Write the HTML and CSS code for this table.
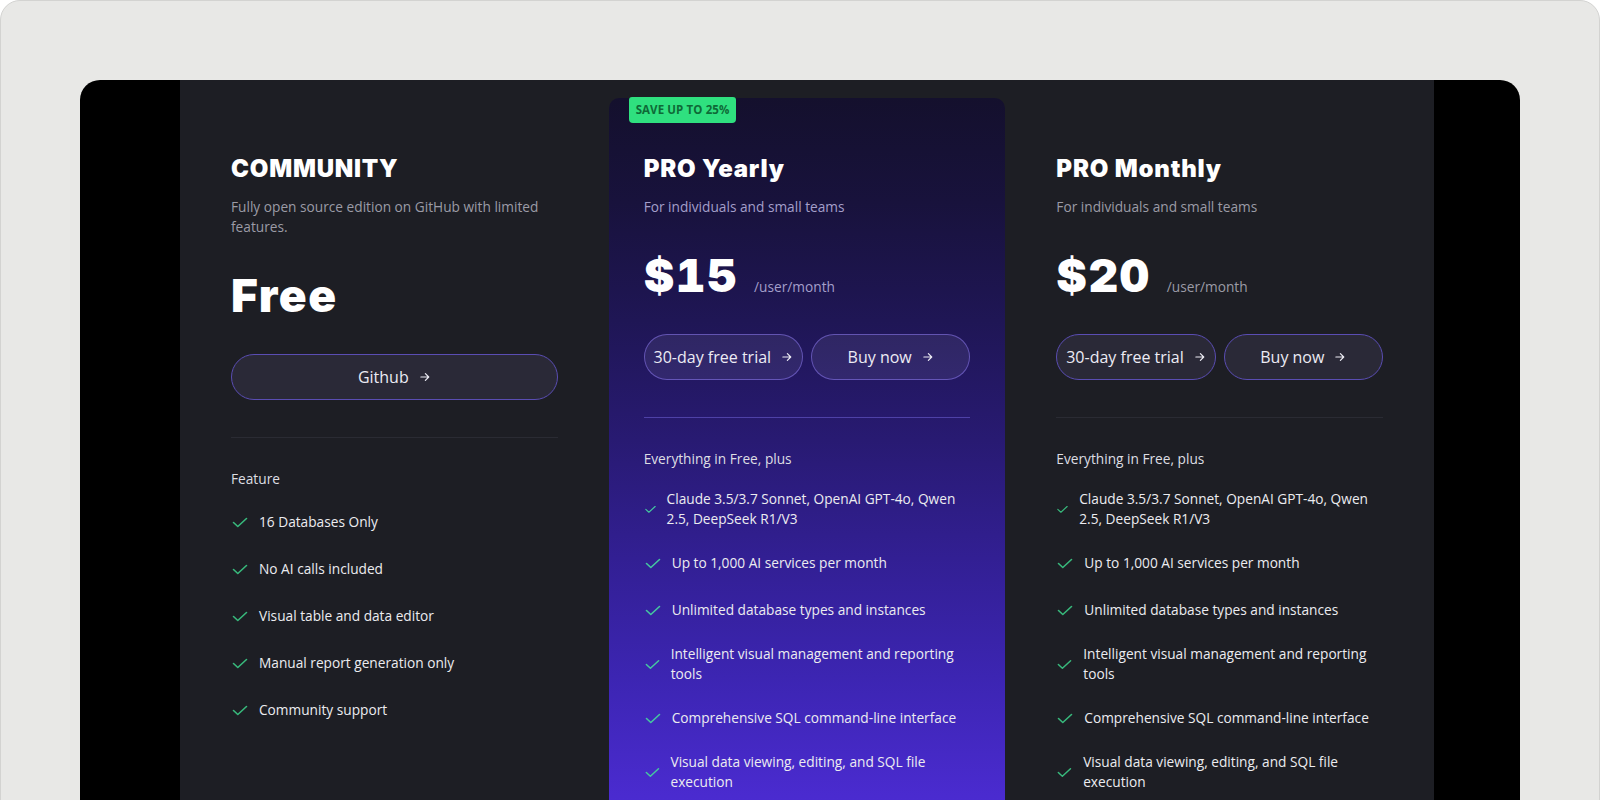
FILE: index.html
```html
<!DOCTYPE html>
<html lang="en">
<head>
<meta charset="utf-8">
<title>Pricing</title>
<link rel="stylesheet" href="styles.css">
</head>
<body>
<div class="shell">
  <div class="frame">
    <div class="pricing">
      <section class="plan">
        <h2 class="plan-title">COMMUNITY</h2>
        <p class="plan-desc">Fully open source edition on GitHub with limited features.</p>
        <div class="price"><span class="amount">Free</span></div>
        <div class="actions">
          <a class="btn" href="#">Github <svg class="arrow" viewBox="0 0 16 16"><path d="M2.5 8h10.5M8.5 3.5L13 8l-4.5 4.5"/></svg></a>
        </div>
        <div class="divider"></div>
        <div class="list-label">Feature</div>
        <ul class="features">
          <li><svg class="check" viewBox="0 0 18 18"><path d="M2.5 9.5L6.8 13.5L15.5 5.5"/></svg><span>16 Databases Only</span></li>
          <li><svg class="check" viewBox="0 0 18 18"><path d="M2.5 9.5L6.8 13.5L15.5 5.5"/></svg><span>No AI calls included</span></li>
          <li><svg class="check" viewBox="0 0 18 18"><path d="M2.5 9.5L6.8 13.5L15.5 5.5"/></svg><span>Visual table and data editor</span></li>
          <li><svg class="check" viewBox="0 0 18 18"><path d="M2.5 9.5L6.8 13.5L15.5 5.5"/></svg><span>Manual report generation only</span></li>
          <li><svg class="check" viewBox="0 0 18 18"><path d="M2.5 9.5L6.8 13.5L15.5 5.5"/></svg><span>Community support</span></li>
        </ul>
      </section>

      <section class="plan plan--featured">
        <span class="badge">SAVE UP TO 25%</span>
        <h2 class="plan-title">PRO Yearly</h2>
        <p class="plan-desc">For individuals and small teams</p>
        <div class="price"><span class="amount">$15</span><span class="per">/user/month</span></div>
        <div class="actions">
          <a class="btn" href="#">30-day free trial <svg class="arrow" viewBox="0 0 16 16"><path d="M2.5 8h10.5M8.5 3.5L13 8l-4.5 4.5"/></svg></a>
          <a class="btn" href="#">Buy now <svg class="arrow" viewBox="0 0 16 16"><path d="M2.5 8h10.5M8.5 3.5L13 8l-4.5 4.5"/></svg></a>
        </div>
        <div class="divider"></div>
        <div class="list-label">Everything in Free, plus</div>
        <ul class="features">
          <li><svg class="check" viewBox="0 0 18 18"><path d="M2.5 9.5L6.8 13.5L15.5 5.5"/></svg><span>Claude 3.5/3.7 Sonnet, OpenAI GPT-4o, Qwen 2.5, DeepSeek R1/V3</span></li>
          <li><svg class="check" viewBox="0 0 18 18"><path d="M2.5 9.5L6.8 13.5L15.5 5.5"/></svg><span>Up to 1,000 AI services per month</span></li>
          <li><svg class="check" viewBox="0 0 18 18"><path d="M2.5 9.5L6.8 13.5L15.5 5.5"/></svg><span>Unlimited database types and instances</span></li>
          <li><svg class="check" viewBox="0 0 18 18"><path d="M2.5 9.5L6.8 13.5L15.5 5.5"/></svg><span>Intelligent visual management and reporting tools</span></li>
          <li><svg class="check" viewBox="0 0 18 18"><path d="M2.5 9.5L6.8 13.5L15.5 5.5"/></svg><span>Comprehensive SQL command-line interface</span></li>
          <li><svg class="check" viewBox="0 0 18 18"><path d="M2.5 9.5L6.8 13.5L15.5 5.5"/></svg><span>Visual data viewing, editing, and SQL file execution</span></li>
        </ul>
      </section>

      <section class="plan">
        <h2 class="plan-title">PRO Monthly</h2>
        <p class="plan-desc">For individuals and small teams</p>
        <div class="price"><span class="amount">$20</span><span class="per">/user/month</span></div>
        <div class="actions">
          <a class="btn" href="#">30-day free trial <svg class="arrow" viewBox="0 0 16 16"><path d="M2.5 8h10.5M8.5 3.5L13 8l-4.5 4.5"/></svg></a>
          <a class="btn" href="#">Buy now <svg class="arrow" viewBox="0 0 16 16"><path d="M2.5 8h10.5M8.5 3.5L13 8l-4.5 4.5"/></svg></a>
        </div>
        <div class="divider"></div>
        <div class="list-label">Everything in Free, plus</div>
        <ul class="features">
          <li><svg class="check" viewBox="0 0 18 18"><path d="M2.5 9.5L6.8 13.5L15.5 5.5"/></svg><span>Claude 3.5/3.7 Sonnet, OpenAI GPT-4o, Qwen 2.5, DeepSeek R1/V3</span></li>
          <li><svg class="check" viewBox="0 0 18 18"><path d="M2.5 9.5L6.8 13.5L15.5 5.5"/></svg><span>Up to 1,000 AI services per month</span></li>
          <li><svg class="check" viewBox="0 0 18 18"><path d="M2.5 9.5L6.8 13.5L15.5 5.5"/></svg><span>Unlimited database types and instances</span></li>
          <li><svg class="check" viewBox="0 0 18 18"><path d="M2.5 9.5L6.8 13.5L15.5 5.5"/></svg><span>Intelligent visual management and reporting tools</span></li>
          <li><svg class="check" viewBox="0 0 18 18"><path d="M2.5 9.5L6.8 13.5L15.5 5.5"/></svg><span>Comprehensive SQL command-line interface</span></li>
          <li><svg class="check" viewBox="0 0 18 18"><path d="M2.5 9.5L6.8 13.5L15.5 5.5"/></svg><span>Visual data viewing, editing, and SQL file execution</span></li>
        </ul>
      </section>
    </div>
  </div>
</div>
</body>
</html>
```

FILE: styles.css
```css
html, body {
  margin: 0;
  padding: 0;
  background: #ffffff;
  overflow: hidden;
}

body {
  font-family: "Open Sans", "Noto Sans", sans-serif;
}

.shell {
  box-sizing: border-box;
  width: 1600px;
  height: 840px;
  border: 1px solid #d3d3d1;
  border-radius: 20px;
  background: #e8e8e6;
  padding: 79px 0 0 79px;
  overflow: hidden;
}

.frame {
  box-sizing: border-box;
  width: 1440px;
  height: 760px;
  background: #000;
  border-radius: 20px 20px 0 0;
  padding-left: 100px;
  overflow: hidden;
}

.pricing {
  box-sizing: border-box;
  width: 1254px;
  height: 100%;
  background: #1d1e24;
  display: grid;
  grid-template-columns: repeat(3, 1fr);
  gap: 16px;
  padding: 18px 16px 0;
}

.plan {
  position: relative;
  padding: 55px 35px 0;
  border-radius: 10px 10px 0 0;
  min-width: 0;
}

.plan--featured {
  background: linear-gradient(180deg, #14102d 0%, #18123c 14%, #1f1655 30%, #281a72 46%, #321f93 62%, #3c25b2 78%, #4a2bcf 94%, #4d2dd4 100%);
}

.badge {
  position: absolute;
  top: -1px;
  left: 20px;
  background: #2fe07f;
  color: #0e6a37;
  font-weight: 700;
  font-size: 11.5px;
  line-height: 26px;
  padding: 0 7px;
  border-radius: 3px 3px 4px 4px;
  letter-spacing: 0.1px;
}

.plan-title {
  margin: 0;
  font-family: "Inter", "Roboto", sans-serif;
  font-weight: 900;
  font-size: 24px;
  line-height: 32px;
  letter-spacing: 0.8px;
  color: #ffffff;
}

.plan-desc {
  margin: 12px 0 0;
  font-size: 13.7px;
  line-height: 20px;
  color: #9b9ba6;
}

.plan--featured .plan-desc {
  color: #a49fca;
}

.price {
  display: flex;
  align-items: baseline;
  margin-top: 30px;
}

.amount {
  font-family: "Inter", "Roboto", sans-serif;
  font-weight: 900;
  font-size: 46px;
  line-height: 56px;
  letter-spacing: 1.5px;
  font-variant-numeric: tabular-nums;
  color: #ffffff;
}

.per {
  margin-left: 16px;
  font-size: 13.7px;
  color: #9b9ba6;
}

.plan--featured .per {
  color: #a49fca;
}

.actions {
  display: flex;
  gap: 8px;
  margin-top: 31px;
}

.btn {
  flex: 1;
  box-sizing: border-box;
  height: 46px;
  border-radius: 23px;
  border: 1px solid #5a4db3;
  background: #2a2937;
  color: #ecebf4;
  font-size: 16px;
  text-decoration: none;
  display: flex;
  align-items: center;
  justify-content: center;
  gap: 10px;
  white-space: nowrap;
}

.plan--featured .btn {
  background: rgba(255, 255, 255, 0.07);
  border-color: rgba(150, 130, 255, 0.5);
}

.arrow {
  width: 12px;
  height: 12px;
  fill: none;
  stroke: currentColor;
  stroke-width: 1.6;
  stroke-linecap: round;
  stroke-linejoin: round;
}

.divider {
  height: 1px;
  margin-top: 37px;
  background: #2a2b33;
}

.plan--featured .divider {
  background: rgba(140, 125, 255, 0.4);
}

.list-label {
  margin-top: 31px;
  font-size: 13.7px;
  line-height: 20px;
  color: #dedee3;
}

.features {
  list-style: none;
  margin: 20px 0 0;
  padding: 0;
  display: flex;
  flex-direction: column;
  gap: 21px;
}

.features li {
  display: flex;
  align-items: center;
  gap: 10px;
  min-height: 26px;
  font-size: 13.7px;
  line-height: 20px;
  color: #ececf0;
}

.check {
  flex: 0 1 18px;
  width: 18px;
  height: 18px;
  min-width: 0;
  fill: none;
  stroke: #38b97c;
  stroke-width: 1.6;
  stroke-linecap: round;
  stroke-linejoin: round;
}

.plan--featured .check {
  stroke: #45c7a0;
}
```
